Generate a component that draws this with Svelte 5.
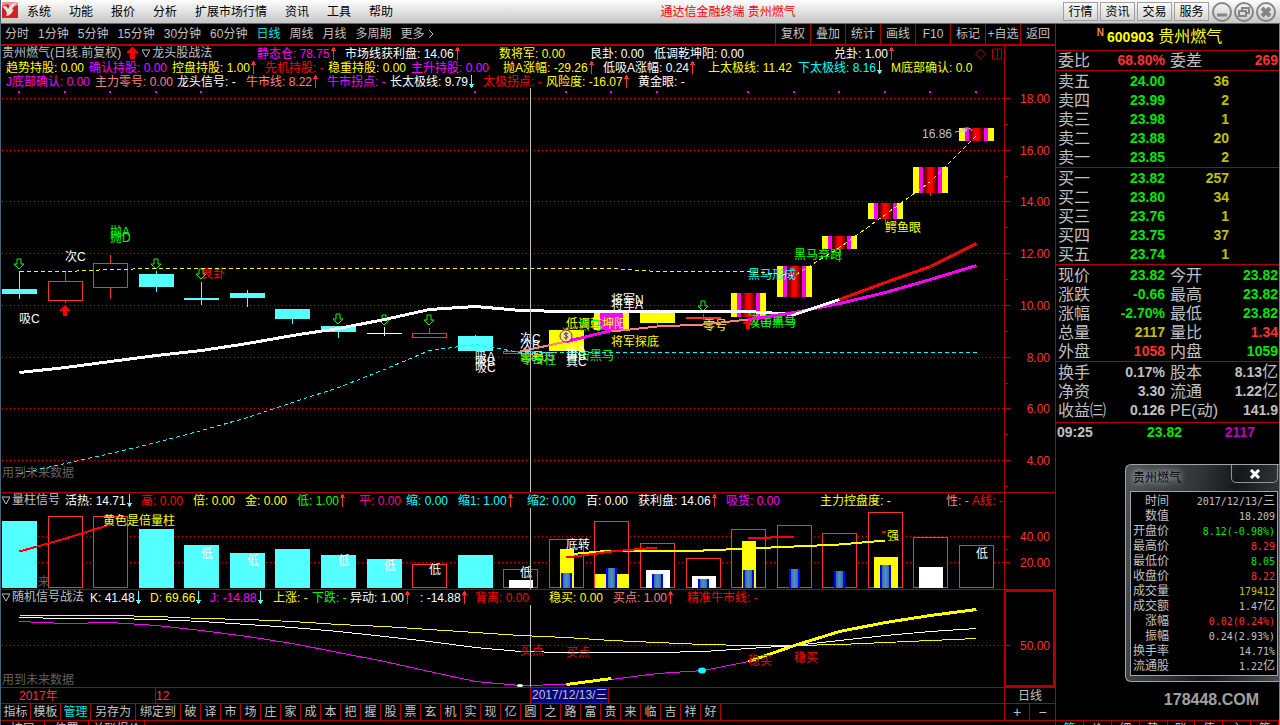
<!--
  Stock terminal, daily K-line view.
  Three stacked chart panes share one time axis; the order book sits on the right.
-->
<script lang="ts">
  type Dir = 'up' | 'down' | '';
  /** label, value, colour class, trend arrow, reserved width */
  type Legend = [string, string, string, Dir, number];

  const menus = ['系统', '功能', '报价', '分析', '扩展市场行情', '资讯', '工具', '帮助'];
  const links = ['行情', '资讯', '交易', '服务'];
  const periods = ['分时', '1分钟', '5分钟', '15分钟', '30分钟', '60分钟', '日线', '周线', '月线', '多周期', '更多'];
  const tools = ['复权', '叠加', '统计', '画线', 'F10', '标记', '+自选', '返回'];
  const templates = [...'破译市场庄家成本把握股票玄机实现亿圆之路富贵来临吉祥好'];
  const sideTabs = [...'笔价细势联值主筹'];

  const main1: Legend[] = [
    ['静态仓', '78.75', 'm', 'up', 88],
    ['市场线获利盘', '14.06', 'w', 'up', 154],
    ['数将军', '0.00', 'y', '', 91],
    ['艮卦', '0.00', 'w', '', 64],
    ['低调乾坤阳', '0.00', 'w', '', 180],
    ['兑卦', '1.00', 'w', 'up', 70],
  ];
  const main2: Legend[] = [
    ['趋势持股', '0.00', 'y', '', 83],
    ['确认持股', '0.00', 'm', '', 83],
    ['控盘持股', '1.00', 'y', 'up', 93],
    ['先机持股', '-', 'r', '', 63],
    ['稳重持股', '0.00', 'y', '', 83],
    ['主升持股', '0.00', 'm', '', 92],
    ['抛A涨幅', '-29.26', 'y', 'up', 100],
    ['低吸A涨幅', '0.24', 'w', 'up', 105],
    ['上太极线', '11.42', 'y', '', 90],
    ['下太极线', '8.16', 'c', 'down', 93],
    ['M底部确认', '0.0', 'y', '', 90],
  ];
  const main3: Legend[] = [
    ['J底部确认', '0.00', 'm', '', 89],
    ['主力零号', '0.00', 'p', '', 82],
    ['龙头信号', '-', 'w', '', 69],
    ['牛市线', '8.22', 'p', 'up', 81],
    ['牛市拐点', '-', 'm', '', 63],
    ['长太极线', '9.79', 'w', 'down', 93],
    ['太极拐点', '-', 'r', '', 63],
    ['风险度', '-16.07', 'y', 'up', 92],
    ['黄金眼', '-', 'w', '', 60],
  ];
  const volLegend: Legend[] = [
    ['活热', '14.71', 'w', 'down', 76],
    ['高', '0.00', 'r', '', 52],
    ['倍', '0.00', 'y', '', 52],
    ['金', '0.00', 'y', '', 52],
    ['低', '1.00', 'g', 'up', 62],
    ['平', '0.00', 'k', '', 47],
    ['缩', '0.00', 'c', '', 52],
    ['缩1', '1.00', 'c', 'up', 69],
    ['缩2', '0.00', 'c', '', 59],
    ['百', '0.00', 'w', '', 52],
    ['获利盘', '14.06', 'w', 'up', 88],
    ['吸货', '0.00', 'm', '', 94],
    ['主力控盘度', '-', 'y', '', 126],
    ['性', '-', 'p', '', 26],
    ['A线', '-', 'r', '', 30],
  ];
  const kdjLegend: Legend[] = [
    ['K', '41.48', 'w', 'down', 60],
    ['D', '69.66', 'y', 'down', 60],
    ['J', '-14.88', 'm', 'down', 63],
    ['上涨', '-', 'y', '', 39],
    ['下跌', '-', 'g', '', 38],
    ['异动', '1.00', 'w', 'up', 70],
    ['', '-14.88', 'w', 'up', 55],
    ['背离', '0.00', 'r', '', 74],
    ['稳买', '0.00', 'y', '', 64],
    ['买点', '1.00', 'p', 'up', 74],
    ['精准牛市线', '-', 'r', '', 80],
  ];

  // candle: kind, body top, body bottom, wick top, wick bottom
  const candles: [string, number, number, number, number][] = [
    ['down', 289, 294, 271, 299],
    ['up', 281, 301, 272, 303],
    ['up', 263, 288, 255, 299],
    ['down', 274, 287, 271, 292],
    ['down', 298, 300, 282, 305],
    ['down', 293, 298, 290, 307],
    ['down', 309, 319, 309, 324],
    ['down', 326, 332, 326, 338],
    ['flat', 333, 334, 327, 336],
    ['up', 333, 338, 328, 338],
    ['down', 336, 351, 335, 351],
    ['up', 351, 354, 351, 354],
    ['gold', 330, 351, 330, 351],
    ['general', 312, 330, 312, 330],
    ['gold', 313, 323, 309, 326],
    ['bar', 317, 319, 314, 320],
    ['limit', 293, 317, 293, 317],
    ['limit', 266, 297, 266, 297],
    ['limit', 236, 249, 236, 262],
    ['limit', 203, 219, 203, 224],
    ['limit', 167, 193, 167, 196],
    ['limit', 128, 141, 128, 141],
  ];
  const dots = [0, 1, 2, 3, 4, 10, 12, 13, 14, 16, 17, 18, 19, 20, 21];
  const sells: [number, number][] = [[0, 259], [3, 259], [4, 269], [7, 314], [8, 315], [9, 315], [15, 301]];
  const buys: [number, number][] = [[1, 305], [16, 318]];

  // index, x shift, baseline, text, colour
  const notes: [number, number, number, string, string][] = [
    [2, 0, 236, '抛A', 'g'],
    [2, 0, 242, '抛D', 'g'],
    [1, 0, 261, '次C', 'w'],
    [0, 0, 323, '吸C', 'w'],
    [4, 0, 278, '艮卦', 'r'],
    [10, 0, 361, '吸A', 'w'],
    [10, 0, 366, '吸B', 'w'],
    [10, 0, 372, '吸C', 'w'],
    [11, 0, 343, '次C', 'w'],
    [11, 0, 349, '次B', 'w'],
    [11, 11, 361, '8.05', 'n'],
    [11, 0, 362, '零号', 'y'],
    [11, 0, 364, '零击柱', 'g'],
    [12, 0, 328, '低调乾坤阳', 'y'],
    [12, 12, 330, '黑马', 'g'],
    [12, 0, 360, '进击黑马', 'g'],
    [12, 0, 355, '再A', 'w'],
    [12, 0, 360, '再B', 'w'],
    [12, 0, 366, '真C', 'w'],
    [13, 0, 304, '将军N', 'w'],
    [13, 0, 309, '将军A', 'w'],
    [13, 0, 346, '将军探底', 'y'],
    [15, 0, 330, '零号', 'y'],
    [16, 0, 324, '进出黑马', 'g'],
    [16, 0, 327, '攻击黑马', 'g'],
    [16, 0, 279, '黑马形成', 'c'],
    [17, 0, 259, '黑马奔跑', 'g'],
    [19, 0, 232, '鳄鱼眼', 'y'],
  ];

  const volumes: [boolean, number][] = [
    [true, 521], [false, 516], [false, 516], [true, 529], [true, 545], [true, 553],
    [true, 549], [true, 555], [true, 559], [false, 564], [true, 555], [false, 569],
    [false, 539], [false, 521], [false, 543], [false, 558], [false, 529], [false, 525],
    [false, 533], [false, 512], [false, 537], [false, 545],
  ];
  // index, half width, top, colour
  const inner: [number, number, number, string][] = [
    [11, 12, 580, 'white'], [12, 7, 549, 'yellow'], [13, 17, 574, 'yellow'], [14, 12, 570, 'white'],
    [15, 12, 576, 'white'], [16, 7, 541, 'yellow'], [19, 12, 557, 'yellow'], [20, 12, 567, 'white'],
  ];
  const blues: [number, number][] = [
    [12, 573], [13, 568], [14, 574], [15, 579], [16, 570], [17, 569], [18, 571], [19, 565],
  ];
  const lows: [number, number][] = [[4, 558], [5, 565], [7, 565], [8, 570], [9, 574], [11, 577], [21, 558]];

  const asks = [['卖五', '24.00', '36'], ['卖四', '23.99', '2'], ['卖三', '23.98', '1'], ['卖二', '23.88', '20'], ['卖一', '23.85', '2']];
  const bids = [['买一', '23.82', '257'], ['买二', '23.80', '34'], ['买三', '23.76', '1'], ['买四', '23.75', '37'], ['买五', '23.74', '1']];
  const stats = [
    ['现价', '23.82', 'dn', '今开', '23.82', 'dn', ''],
    ['涨跌', '-0.66', 'dn', '最高', '23.82', 'dn', ''],
    ['涨幅', '-2.70%', 'dn', '最低', '23.82', 'dn', ''],
    ['总量', '2117', 'amt', '量比', '1.34', 'up', ''],
    ['外盘', '1058', 'up', '内盘', '1059', 'dn', ''],
  ];
  const basics = [
    ['换手', '0.17%', 'n', '股本', '8.13', 'n', '亿'],
    ['净资', '3.30', 'n', '流通', '1.22', 'n', '亿'],
    ['收益㈢', '0.126', 'n', 'PE(动)', '141.9', 'n', ''],
  ];
  const detail = [
    ['时间', '2017/12/13/', 'n', '三'],
    ['数值', '18.209', 'n', ''],
    ['开盘价', '8.12(-0.98%)', 'dn', ''],
    ['最高价', '8.29', 'up', ''],
    ['最低价', '8.05', 'dn', ''],
    ['收盘价', '8.22', 'up', ''],
    ['成交量', '179412', 'amt', ''],
    ['成交额', '1.47', 'n', '亿'],
    ['涨幅', '0.02(0.24%)', 'up', ''],
    ['振幅', '0.24(2.93%)', 'n', ''],
    ['换手率', '14.71%', 'n', ''],
    ['流通股', '1.22', 'n', '亿'],
  ];

  let width = $state(1003);
  let period = $state('日线');

  const x = (i: number) => Math.round(18 + (i * (width - 46)) / 21);
  const priceY = (p: number) => Math.round(98 + (18 - p) * 25.86);

  /** Polyline points for one y per bar, starting at bar `from`, on pixel centres. */
  function line(ys: number[], from = 0): string {
    return ys.map((y, i) => `${x(from + i) + 0.5},${y + 0.5}`).join(' ');
  }
</script>

{#snippet legend(items: Legend[])}
  {#each items as [name, value, color, dir, slot]}
    <span class="item {color}" style:width="{slot}px">
      {name}: {value}{#if dir}<svg class="trend {dir}" width="7" height="13" viewBox="0 0 7 13"><path d={dir === 'up' ? 'M3 0h1v1h1v2h1v1H4v9H3V4H1V3h1V1h1z' : 'M3 13h1v-1h1v-2h1V9H4V0H3v9H1v1h1v2h1z'} /></svg>{/if}
    </span>
  {/each}
{/snippet}

{#snippet bookRows(rows: string[][])}
  <table class="block">
    <tbody>
      {#each rows as [name, price, qty]}
        <tr><th>{name}</th><td class="dn">{price}</td><td class="amt qty">{qty}</td><td class="rest"></td></tr>
      {/each}
    </tbody>
  </table>
{/snippet}

{#snippet pairRows(rows: string[][])}
  <table class="block">
    <tbody>
      {#each rows as [a, av, ac, b, bv, bc, unit]}
        <tr>
          <th>{a}</th><td class={ac}>{av}</td>
          <th class="second">{b}</th><td class="rest {bc}">{bv}{#if unit}<span class="unit">{unit}</span>{/if}</td>
        </tr>
      {/each}
    </tbody>
  </table>
{/snippet}

<div class="app">
  <header class="titlebar">
    <svg class="logo" width="16" height="16" viewBox="0 0 16 16">
      <rect width="16" height="16" fill="#d42020" />
      <path d="M0 0h16v3L9 6 6 2 0 4z" fill="#f09090" />
      <path d="M0 5c3-2 5-1 6 2 2-4 5-6 10-7-4 3-5 5-6 8l2-1c-2 4-4 7-8 7 1-2 1-3 0-5-1-2-2-3-4-4z" fill="#e8e4e4" />
    </svg>
    <nav class="menu">
      {#each menus as m}<button type="button">{m}</button>{/each}
    </nav>
    <h1>通达信金融终端 贵州燃气</h1>
    <div class="links">
      {#each links as l}<button type="button">{l}</button>{/each}
    </div>
    <div class="window">
      <button type="button" aria-label="最小化"><svg width="20" height="20" viewBox="0 0 20 20"><circle cx="10" cy="10" r="9" /><path d="M5 13h10" stroke-width="3" /></svg></button>
      <button type="button" aria-label="还原"><svg width="20" height="20" viewBox="0 0 20 20"><circle cx="10" cy="10" r="9" /><path d="M8 8V6h7v5h-3M5 9h7v5H5z" /></svg></button>
      <button type="button" aria-label="关闭"><svg width="20" height="20" viewBox="0 0 20 20"><circle cx="10" cy="10" r="9" /><path d="M6 6l8 8M14 6l-8 8" stroke-width="4" /></svg></button>
    </div>
  </header>

  <div class="body">
    <main>
      <div class="toolbar">
        <div class="periods">
          {#each periods as p}
            <button type="button" class:active={p === period} onclick={() => (period = p)}>{p}</button>
          {/each}
          <svg class="next" width="6" height="10" viewBox="0 0 6 10"><path d="M1 1l4 4-4 4" fill="none" stroke="#c0c0c0" /></svg>
        </div>
        <div class="tools">
          {#each tools as t}<button type="button">{t}</button>{/each}
        </div>
      </div>

      <section class="pane">
        <div class="plot" bind:clientWidth={width}>
          <div class="legend">
            <span class="name n">贵州燃气(日线.前复权)
              <svg class="mark" width="11" height="12" viewBox="0 0 11 12"><path d="M5 0h1l5 5v1H8v6H3V6H0V5z" fill="red" /></svg>
              <svg width="8" height="9" viewBox="0 0 8 9"><path d="M0 1h8L4 8z" fill="none" stroke="#c0c0c0" /></svg>龙头股战法</span>
            {@render legend(main1)}
            <svg class="corner" width="28" height="12" viewBox="0 0 28 12" fill="none" stroke="#b00000"><path d="M5.5 1l5 5-5 5-5-5zM17.500 1h9v10h-9zM22.500 1v10" /></svg>
          </div>
          <div class="legend inset">{@render legend(main2)}</div>
          <div class="legend inset">{@render legend(main3)}</div>
          <svg class="chart" height="404" viewBox="0 88 {width} 404">
            <defs>
              <linearGradient id="limit">
                <stop offset="0" stop-color="#200000" />
                <stop offset="0.4" stop-color="#ff0000" />
                <stop offset="0.6" stop-color="#ff0000" />
                <stop offset="1" stop-color="#200000" />
              </linearGradient>
            </defs>
            {#each [18, 16, 14, 12, 10, 8, 6, 4] as p}
              <line class="grid" x1="1" x2={width} y1={priceY(p) + 0.5} y2={priceY(p) + 0.5} />
            {/each}
            {#each dots as i}<rect x={x(i) - 1} y="91" width="2" height="2" fill="#f0f" />{/each}
            <text class="faint" x="1" y="477">用到未来数据</text>

            {#each candles as [kind, top, bottom, high, low], i}
              {@const left = x(i) - 17}
              <g class="candle {kind}">
                {#if high < top}<path class="wick" d="M{x(i) + 0.5} {high}V{top}" />{/if}
                {#if low > bottom}<path class="wick" d="M{x(i) + 0.5} {bottom}V{low}" />{/if}
                {#if kind === 'up'}
                  <rect class="box" x={left + 0.5} y={top + 0.5} width="34" height={bottom - top - 1} />
                {:else}
                  <rect class="box" x={left} y={top} width="35" height={bottom - top} />
                {/if}
                {#if kind === 'general'}<rect x={left + 6} y={top} width="23" height={bottom - top} fill="#f0f" />{/if}
                {#if kind === 'limit'}
                  <rect x={left + 6} y={top} width="23" height={bottom - top} fill="#f0f" />
                  <rect x={left + 10} y={top} width="15" height={bottom - top} fill="url(#limit)" />
                {/if}
              </g>
            {/each}

            {#each notes as [i, dx, y, text, color]}
              <text class={color} x={x(i) + dx} {y}>{text}</text>
            {/each}
            {#each sells as [i, y]}
              <path d="M{x(i) - 2} {y}h4v5h3l-5 5-5-5h3z" fill="none" stroke="#0f0" />
            {/each}
            {#each buys as [i, y]}
              <path d="M{x(i)} {y}l5 5v1h-3v5h-4v-5h-3v-1z" fill="red" />
            {/each}

            <polyline class="dash" stroke="#0ff" points={line([473, 463, 453, 442, 430, 417, 402, 387, 369, 350, 344, 352, 352, 352, 352, 352, 352, 352, 352, 352, 352, 352])} />
            <polyline class="dash" stroke="#ff0" points={line([271, 271, 269, 268, 268, 268, 268, 268, 268, 268, 268, 268, 268, 268, 271, 271, 271, 275, 247, 214, 181, 135])} />
            <polyline class="thick" stroke="#fff" points={line([372, 367, 361, 355, 350, 343, 335, 328, 319, 309, 306, 310, 311, 311, 311, 311, 311, 314, 299])} />
            <polyline class="mid" stroke="#ff8080" points={line([351, 341], 11)} />
            <polyline class="mid" stroke="#ff8080" points={line([331, 326, 324, 319], 13)} />
            <polyline class="thick" stroke="#f0f" points={line([341, 330], 12)} />
            <polyline class="thick" stroke="#f0f" points={line([319, 312, 303, 292, 279, 265], 16)} />
            <polyline class="thick" stroke="#fff" points={line([314, 299], 17)} />
            <polyline class="thick" stroke="#f00" points={line([299, 282, 266, 243], 18)} />

            <g transform="translate({x(12) - 7} 326)">
              <path d="M4 1l2 2 2-2 2 1-1 4H5z" fill="#d8b060" stroke="#604010" />
              <circle cx="7" cy="10" r="6" fill="#f0e0a0" stroke="#604010" />
              <path d="M9 8c-1-1-4-1-4 0s4 2 4 3-3 2-4 0M7 6v8" fill="none" stroke="#604010" />
            </g>
            <text class="n" x={x(21) - 54} y="138">16.86</text>
            <path d="M{x(21) - 21} 132l12-2m-4-2l4 2-3 3m-2-4q8-3 10 2" fill="none" stroke="#c0c0c0" />
            <line class="cross" x1="529.5" x2="529.5" y1="88" y2="492" />
          </svg>
        </div>
        <svg class="axis" viewBox="0 46 50 446" height="446">
          {#each [18, 16, 14, 12, 10, 8, 6, 4] as p}
            <path d="M0 {priceY(p) + 0.5}h6M0 {priceY(p) + 26.5}h3" />
            <text x="45" y={priceY(p) + 5}>{p.toFixed(2)}</text>
          {/each}
        </svg>
      </section>

      <section class="pane">
        <div class="plot">
          <div class="legend">
            <span class="name n short"><svg width="8" height="9" viewBox="0 0 8 9"><path d="M0 1h8L4 8z" fill="none" stroke="#c0c0c0" /></svg> 量柱信号</span>
            {@render legend(volLegend)}
          </div>
          <svg class="chart" height="82" viewBox="0 507 {width} 82">
            <defs>
              <linearGradient id="steel">
                <stop offset="0" stop-color="#3070a8" />
                <stop offset="0.5" stop-color="#5090c0" />
                <stop offset="1" stop-color="#3070a8" />
              </linearGradient>
            </defs>
            <line class="grid" x1="1" x2={width} y1="536.5" y2="536.5" />
            <line class="grid" x1="1" x2={width} y1="562.5" y2="562.5" />
            <text class="faint" x="37" y="586">来</text>
            {#each volumes as [filled, top], i}
              {#if filled}
                <rect x={x(i) - 17} y={top} width="35" height={588 - top} fill="#54ffff" />
              {:else}
                <rect x={x(i) - 16.5} y={top + 0.5} width="34" height={587 - top} fill="#000" stroke="#ff3232" />
              {/if}
            {/each}
            {#each inner as [i, half, top, color]}
              <rect x={x(i) - half + 1} y={top} width={half * 2} height={588 - top} fill={color} />
            {/each}
            {#each blues as [i, top]}
              <rect x={x(i) - 5} y={top} width="11" height={588 - top} fill="#00f" />
              <rect x={x(i) - 3} y={top} width="7" height={588 - top} fill="url(#steel)" />
            {/each}
            <polyline class="mid" stroke="#f00" points={line([551, 538, 524])} />
            <polyline class="mid" stroke="#ff0" points={line([554, 550, 550, 550, 548, 546, 544, 540], 12)} />
            <polyline class="mid" stroke="#f00" points={line([557, 551, 547], 12)} />
            <polyline class="mid" stroke="#f00" points={line([538, 536], 16)} />
            <path d="M{x(19) - 3} 532h4" stroke="#f00" stroke-width="2" />
            <text class="y" x="102" y="525">黄色是倍量柱</text>
            {#each lows as [i, y]}<text class="w" x={x(i)} {y}>低</text>{/each}
            <text class="w" x={x(12)} y="549">底转</text>
            <text class="y" x={x(19) + 2} y="540">强</text>
            <line class="cross" x1="529.5" x2="529.5" y1="508" y2="589" />
          </svg>
        </div>
        <svg class="axis" viewBox="0 493 50 96" height="96">
          <path d="M0 536.5h5M0 549.5h3M0 562.5h5" />
          <text x="45" y="541">40.00</text>
          <text x="45" y="567">20.00</text>
        </svg>
      </section>

      <section class="pane">
        <div class="plot">
          <div class="legend">
            <span class="name n wide"><svg width="8" height="9" viewBox="0 0 8 9"><path d="M0 1h8L4 8z" fill="none" stroke="#c0c0c0" /></svg> 随机信号战法</span>
            {@render legend(kdjLegend)}
          </div>
          <svg class="chart" height="83" viewBox="0 604 {width} 83">
            <line class="grid" x1="1" x2={width} y1="645.5" y2="645.5" />
            <text class="faint" x="1" y="684">用到未来数据</text>
            <polyline stroke="#ff0" points={line([615, 615, 615, 616, 618, 619, 621, 624, 626, 629, 632, 635, 637, 640, 642, 644, 645, 645, 644, 642, 640, 638])} />
            <polyline stroke="#fff" points={line([617, 618, 618, 619, 621, 624, 627, 631, 636, 641, 647, 651, 652, 652, 652, 651, 648, 645, 640, 635, 631, 628])} />
            <polyline stroke="#f0f" points={line([621, 623, 622, 625, 630, 636, 643, 652, 661, 671, 681, 685, 684, 679, 673, 670, 661])} />
            <polyline class="thick" stroke="#ff0" points={line([684, 678], 12)} />
            <polyline class="thick" stroke="#ff0" points={line([661, 645, 631, 622, 615, 609], 16)} />
            <ellipse cx={x(11)} cy="685.5" rx="3" ry="1.500" fill="#fff" />
            <ellipse cx={x(15) - 1} cy="670.5" rx="4" ry="3" fill="#0ff" />
            <text class="r" x={x(11)} y="655">买点</text>
            <text class="r" x={x(12)} y="657">买点</text>
            <text class="r" x={x(16)} y="665">稳买</text>
            <text class="r" x={x(17)} y="662">稳买</text>
            <line class="cross" x1="529.5" x2="529.5" y1="605" y2="687" />
          </svg>
        </div>
        <svg class="axis selected" viewBox="0 590 50 97" height="97">
          <path d="M0 645.5h5" />
          <text x="45" y="650">50.00</text>
        </svg>
      </section>

      <div class="dates">
        <svg class="chart" height="15" viewBox="0 688 {width} 15">
          <text class="s" x={x(0)} y="700">2017年</text>
          <path d="M{x(3) - 0.5} 688v15" stroke="#b00000" />
          <text class="s" x={x(3)} y="700">12</text>
          <rect x="529.5" y="687.5" width="78" height="16" fill="#000080" stroke="#b00000" />
          <text class="n" x="531" y="699">2017/12/13/三</text>
        </svg>
        <span class="period">日线</span>
      </div>

      <div class="tabs">
        <button type="button">指标</button>
        <button type="button">模板</button>
        <button type="button" class="active">管理</button>
        <button type="button" class="long">另存为</button>
        <button type="button" class="long">绑定到</button>
        {#each templates as t}<button type="button" class="one">{t}</button>{/each}
        <div class="zoom">
          <button type="button" aria-label="放大">+</button>
          <button type="button" aria-label="缩小">−</button>
        </div>
      </div>
      <div class="tabs more">
        <button type="button">扩展</button>
        <button type="button">位置</button>
        <button type="button">关联报价</button>
      </div>
    </main>

    <aside>
      <h2><sup>N</sup><b>600903</b> 贵州燃气</h2>
      <table class="block ratio">
        <tbody>
          <tr><th>委比</th><td class="up">68.80%</td><th class="second">委差</th><td class="up rest">269</td></tr>
        </tbody>
      </table>
      {@render bookRows(asks)}
      {@render bookRows(bids)}
      {@render pairRows(stats)}
      {@render pairRows(basics)}
      <div class="tick"><span>09:25</span><span class="dn">23.82</span><span class="vol">2117</span></div>
      <div class="site">178448.COM</div>
      <div class="side-tabs">
        {#each sideTabs as t, i}<button type="button" class:active={i === 0}>{t}</button>{/each}
      </div>

      <div class="popup">
        <div class="popup-head">
          <span>贵州燃气</span>
          <button type="button" aria-label="关闭"><svg width="12" height="10" viewBox="0 0 12 10"><path d="M2 1l8 8M10 1L2 9" stroke="#fff" stroke-width="3" /></svg></button>
        </div>
        <table>
          <tbody>
            {#each detail as [name, value, color, unit]}
              <tr><th>{name}</th><td class={color}>{value}{#if unit}<span>{unit}</span>{/if}</td></tr>
            {/each}
          </tbody>
        </table>
      </div>
    </aside>
  </div>
</div>

<style>
  :global(body) { background: #000; }

  .app {
    --line: #b00000;
    --grey: #c0c0c0;
    display: flex;
    flex-direction: column;
    height: 100vh;
    overflow: hidden;
    box-sizing: border-box;
    border-left: 1px solid #48647c;
    background: #000;
    color: var(--grey);
    font: 12px/14px "Liberation Sans", "Noto Sans CJK SC", sans-serif;
    white-space: nowrap;
  }
  button {
    padding: 0;
    border: 0;
    background: none;
    color: inherit;
    font: inherit;
    cursor: pointer;
  }
  svg { display: block; flex: none; }

  .w { color: #fff; fill: #fff; }
  .y { color: #ff0; fill: #ff0; }
  .m { color: #f0f; fill: #f0f; }
  .c { color: #0ff; fill: #0ff; }
  .g { color: #0f0; fill: #0f0; }
  .r { color: #f00; fill: #f00; }
  .k { color: #ff0080; fill: #ff0080; }
  .p { color: #ff8080; fill: #ff8080; }
  .s { color: #ff3232; fill: #ff3232; }
  .n { color: #c0c0c0; fill: #c0c0c0; }
  .up { color: #ff3232; }
  .dn { color: #00e600; }
  .amt { color: #c0c000; }

  /* title bar */
  .titlebar {
    display: flex;
    align-items: center;
    flex: none;
    height: 23px;
    padding: 0 4px 0 1px;
    border-bottom: 1px solid #686868;
    background: linear-gradient(#fdfdfd, #c6c6c6);
    color: #000;
  }
  .logo { margin-bottom: 4px; }
  .menu { display: flex; gap: 18px; margin-left: 9px; }
  h1 {
    flex: 1;
    margin: 0;
    color: #f00;
    font-size: 12px;
    font-weight: 400;
    text-align: center;
  }
  .links { display: flex; gap: 2px; }
  .links button {
    width: 35px;
    height: 19px;
    border: 1px solid #a0a0a0;
    background: linear-gradient(#fafafa, #d4d4d4);
  }
  .window { display: flex; gap: 2px; margin-left: 3px; }
  .window svg { fill: none; stroke: #858585; stroke-width: 2; }

  .body { display: flex; flex: 1; min-height: 0; }
  main { flex: 1; min-width: 0; overflow: hidden; }

  /* period bar */
  .toolbar {
    display: flex;
    justify-content: space-between;
    height: 20px;
    border-bottom: 2px solid var(--line);
  }
  .periods { display: flex; align-items: center; gap: 9px; padding-left: 4px; }
  .next { margin-left: -6px; }
  .active { color: #00e0e0; }
  .tools { display: flex; }
  .tools button { width: 35px; box-sizing: border-box; border-left: 1px solid var(--line); }

  /* chart panes */
  .pane { display: flex; border-bottom: 1px solid var(--line); }
  .plot { flex: 1; min-width: 0; overflow: hidden; }
  .legend { display: flex; height: 14px; padding-left: 1px; line-height: 17px; }
  .inset { padding-left: 5px; }
  .name { display: flex; align-items: center; flex: none; gap: 2px; width: 255px; }
  .name.short { width: 63px; }
  .name.wide { width: 88px; }
  .mark { margin: 0 2px 0 4px; }
  .item { flex: none; }
  .trend { display: inline-block; vertical-align: -2px; }
  .trend.up { fill: #ff3232; }
  .trend.down { fill: #54ffff; }
  .corner { margin: 2px 1px 0 auto; }

  .chart { width: 100%; font-size: 12px; }
  .grid { stroke: #d00000; stroke-dasharray: 1 3; shape-rendering: crispEdges; }
  .cross { stroke: #c0c0c0; }
  .faint { fill: #606060; }
  polyline { fill: none; shape-rendering: crispEdges; }
  .dash { stroke-dasharray: 4 3; }
  .mid { stroke-width: 2; }
  .thick { stroke-width: 3; }

  .candle .wick { stroke: #ff3232; }
  .up .box { fill: none; stroke: #ff3232; }
  .bar .box { fill: #ff3232; }
  .down .box { fill: #54ffff; }
  .candle.down .wick { stroke: #54ffff; }
  .flat .box { fill: #fff; }
  .candle.flat .wick { stroke: #fff; }
  .gold .box, .general .box, .limit .box { fill: #ff0; }

  .axis {
    width: 50px;
    border-left: 1px solid var(--line);
    fill: none;
    stroke: var(--line);
  }
  .axis text { fill: #ff3232; stroke: none; text-anchor: end; }
  .axis.selected { outline: 2px solid var(--line); outline-offset: -2px; }

  .dates { display: flex; height: 15px; border-bottom: 1px solid var(--line); }
  .dates .chart { flex: 1; min-width: 0; }
  .period { flex: none; width: 50px; border-left: 1px solid var(--line); line-height: 16px; text-align: center; }

  .tabs { display: flex; height: 16px; border-bottom: 1px solid var(--line); }
  .tabs button {
    flex: none;
    box-sizing: border-box;
    width: 30px;
    border-right: 1px solid var(--line);
  }
  .tabs .long { width: 45px; }
  .tabs .one { width: 20px; }
  .zoom { display: flex; margin-left: auto; border-left: 1px solid var(--line); }
  .zoom button { width: 25px; font-size: 14px; }
  .zoom button:last-child { border-right: 0; }
  .more button { width: 44px; height: 16px; }
  .more button:last-child { width: 56px; }

  /* order book */
  aside {
    position: relative;
    display: flex;
    flex-direction: column;
    flex: none;
    box-sizing: border-box;
    width: 225px;
    border-left: 1px solid var(--line);
    border-right: 1px solid #7088a0;
    font-size: 16px;
  }
  h2 {
    margin: 0;
    padding-right: 16px;
    height: 26px;
    border-bottom: 1px solid var(--line);
    color: #ff0;
    font-size: 16px;
    font-weight: 400;
    line-height: 26px;
    text-align: center;
  }
  h2 b { font-size: 14px; }
  h2 sup {
    margin-right: 3px;
    color: #ff8040;
    font-size: 10px;
    font-weight: 700;
    line-height: 10px;
  }
  .block {
    width: 100%;
    table-layout: fixed;
    border-spacing: 0;
    padding: 1px 1px 0 2px;
    border-bottom: 1px solid var(--line);
  }
  .block th, .block td { padding: 0; height: 19px; line-height: 19px; }
  .block th { width: 48px; font-weight: 400; text-align: left; }
  .block th.second { padding-left: 5px; width: 48px; }
  .block td { width: 59px; font-size: 14px; font-weight: 700; text-align: right; }
  .block .qty { width: 64px; }
  .block .rest { width: auto; }
  .ratio { padding: 0 1px 0 2px; }
  .block:last-of-type { padding-bottom: 2px; }
  .unit { font-size: 16px; font-weight: 400; line-height: 14px; }
  .tick {
    display: grid;
    grid-template-columns: 60px 65px 73px;
    padding-left: 1px;
    font-size: 14px;
    font-weight: 700;
    line-height: 19px;
    text-align: right;
  }
  .tick span:first-child { text-align: left; }
  .vol { color: #c000c0; }
  .site {
    margin-top: auto;
    padding: 0 20px 10px;
    color: #a0a0a0;
    font-size: 16px;
    font-weight: 700;
    line-height: 20px;
    text-align: right;
  }
  .side-tabs { display: flex; flex: none; height: 4px; overflow: hidden; border-top: 1px solid var(--line); font-size: 12px; }
  .side-tabs button { flex: 1; height: 16px; border-right: 1px solid var(--line); }

  /* floating quote window */
  .popup {
    position: absolute;
    top: 440px;
    right: 0;
    box-sizing: border-box;
    width: 154px;
    padding: 0 1px 5px 4px;
    border: 1px solid #a0a4a8;
    border-right: 0;
    border-radius: 6px 0 0 6px;
    background: linear-gradient(100deg, #505458, #303436 40%, #14181a 60%, #484c50);
    font-size: 12px;
  }
  .popup-head { display: flex; justify-content: space-between; height: 26px; color: #000; }
  .popup-head span {
    padding: 0 3px;
    line-height: 26px;
    text-shadow: 0 0 6px #ccc, 0 0 8px #aaa;
  }
  .popup-head button {
    display: flex;
    align-items: center;
    justify-content: center;
    width: 47px;
    height: 18px;
    border: 1px solid #909498;
    border-top: 0;
    border-radius: 0 0 5px 5px;
  }
  .popup table {
    width: 100%;
    border-spacing: 0;
    padding: 2px 2px 1px;
    border: 1px solid #a0a4a8;
    background: #000;
  }
  .popup th, .popup td { padding: 0; height: 15px; line-height: 15px; text-align: right; }
  .popup th { width: 36px; font-weight: 400; }
  .popup td { font-family: "DejaVu Sans Mono", monospace; font-size: 10px; }
  .popup td span { font: 12px/10px "Noto Sans CJK SC", sans-serif; }
</style>
